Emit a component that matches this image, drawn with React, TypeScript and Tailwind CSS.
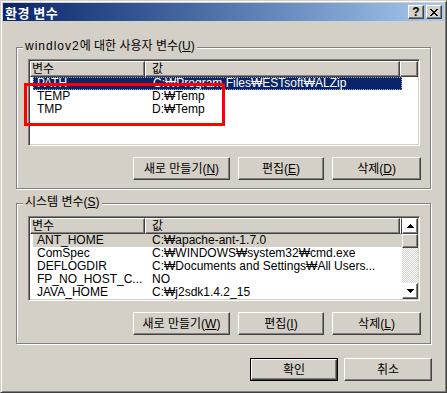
import React from 'react';

const raised =
  'border border-t-white border-l-white border-r-[#404040] border-b-[#404040] shadow-[inset_-1px_-1px_0_#808080]';
const sunken =
  'border border-t-[#808080] border-l-[#808080] border-r-white border-b-white shadow-[inset_1px_1px_0_#404040,inset_-1px_-1px_0_#d4d0c8]';
const etched = 'border border-[#808080] shadow-[inset_1px_1px_0_#ffffff,1px_1px_0_#ffffff]';

interface Var {
  name: string;
  value: string;
}

const userVars: Var[] = [
  { name: 'PATH', value: 'C:₩Program Files₩ESTsoft₩ALZip' },
  { name: 'TEMP', value: 'D:₩Temp' },
  { name: 'TMP', value: 'D:₩Temp' },
];

const sysVars: Var[] = [
  { name: 'ANT_HOME', value: 'C:₩apache-ant-1.7.0' },
  { name: 'ComSpec', value: 'C:₩WINDOWS₩system32₩cmd.exe' },
  { name: 'DEFLOGDIR', value: 'C:₩Documents and Settings₩All Users...' },
  { name: 'FP_NO_HOST_C...', value: 'NO' },
  { name: 'JAVA_HOME', value: 'C:₩j2sdk1.4.2_15' },
  { name: 'JRE_HOME', value: 'C:₩j2sdk1.4.2_15₩jre' },
];

const Key: React.FC<{ k: string }> = ({ k }) => <span className="underline underline-offset-1">{k}</span>;

const Button: React.FC<{ w: string; children: React.ReactNode; primary?: boolean }> = ({ w, children, primary }) => {
  if (primary) {
    return (
      <div className={`${w} h-[23px] border border-black flex`}>
        <div className={`flex-1 flex items-center justify-center ${raised}`}>{children}</div>
      </div>
    );
  }
  return <div className={`${w} h-[23px] flex items-center justify-center ${raised}`}>{children}</div>;
};

const Header = () => (
  <div className="flex h-[16px] bg-[#d4d0c8] leading-[14px]">
    <div className={`w-[115px] pl-[1px] ${raised}`}>변수</div>
    <div className={`w-[255px] pl-[6px] ${raised}`}>값</div>
    <div className={`flex-1 ${raised}`} />
  </div>
);

const Row: React.FC<{ v: Var; tone?: 'focus' | 'gray' }> = ({ v, tone }) => {
  const look =
    tone === 'focus'
      ? 'bg-[#0a246a] text-white border border-dotted border-[#9aa6c4]'
      : tone === 'gray'
        ? 'bg-[#d4d0c8]'
        : '';
  return (
    <div className={`ml-[3px] w-[369px] h-[13px] flex items-center leading-[13px] whitespace-nowrap ${look}`}>
      <div className={`w-[112px] overflow-hidden ${tone === 'focus' ? 'pl-[3px]' : 'pl-[4px]'}`}>{v.name}</div>
      <div className="pl-[7px]">{v.value}</div>
    </div>
  );
};

const Arrow: React.FC<{ up?: boolean }> = ({ up }) => (
  <svg width="7" height="4" viewBox="0 0 7 4" shapeRendering="crispEdges">
    {up ? <path d="M3 0h1v1h1v1h1v1h1v1H0V3h1V2h1V1h1z" fill="#000" /> : <path d="M0 0h7v1H6v1H5v1H4v1H3V3H2V2H1V1H0z" fill="#000" />}
  </svg>
);

const Scrollbar = () => (
  <div className="w-[16px] flex flex-col">
    <div className={`h-[16px] flex items-center justify-center ${raised}`}>
      <Arrow up />
    </div>
    <div className={`h-[14px] bg-[#d4d0c8] ${raised}`} />
    <div className="flex-1 bg-[repeating-conic-gradient(#d4d0c8_0%_25%,#ffffff_0%_50%)] bg-[length:2px_2px]" />
    <div className={`h-[16px] flex items-center justify-center ${raised}`}>
      <Arrow />
    </div>
  </div>
);

export default function App() {
  return (
    <div className="relative w-[447px] h-[393px] bg-[#d4d0c8] p-[2px] border border-t-[#d4d0c8] border-l-[#d4d0c8] border-r-[#404040] border-b-[#404040] shadow-[inset_1px_1px_0_#ffffff,inset_-1px_-1px_0_#808080] text-[12px] text-black font-['Liberation_Sans','Noto_Sans_CJK_KR',sans-serif] overflow-hidden">
      {/* title bar */}
      <div className="h-[18px] flex items-center justify-between bg-linear-to-r from-[#0a246a] to-[#a6caf0] pl-[2px] pr-[2px]">
        <span className="text-white font-bold text-[13px] leading-[15px] tracking-[0.5px] font-['Noto_Sans_CJK_KR',sans-serif]">환경 변수</span>
        <div className="flex gap-[2px]">
          <div className={`w-[16px] h-[14px] bg-[#d4d0c8] flex items-center justify-center ${raised}`}>
            <span className="font-bold text-[12px] leading-[12px] font-['Liberation_Sans',sans-serif]">?</span>
          </div>
          <div className={`w-[16px] h-[14px] bg-[#d4d0c8] flex items-center justify-center ${raised}`}>
            <svg width="8" height="7" viewBox="0 0 8 7" shapeRendering="crispEdges">
              <path d="M0 0h2v1h1v1h2V1h1V0h2v1H7v1H6v1H5v1h1v1h1v1h1v1H6V6H5V5H3v1H2v1H0V6h1V5h1V4h1V3H2V2H1V1H0z" fill="#000" />
            </svg>
          </div>
        </div>
      </div>

      <div className="flex flex-col pl-[13px] pt-[26px]">
        {/* user variables */}
        <div className={`relative w-[415px] h-[142px] pl-[11px] pt-[11px] ${etched}`}>
          <span className="absolute left-[6px] top-[-9px] px-[2px] bg-[#d4d0c8] leading-[15px]">
            <span className="tracking-[1px]">windlov2</span>에 대한 사용자 변수(<Key k="U" />)
          </span>
          <div className={`w-[392px] h-[87px] bg-white p-[1px] ${sunken}`}>
            <div className="w-[388px] h-[83px] overflow-hidden">
              <Header />
              {userVars.map((v, i) => (
                <Row key={v.name} v={v} tone={i === 0 ? 'focus' : undefined} />
              ))}
            </div>
          </div>
          <div className="flex justify-end gap-[8px] pr-[9px] mt-[11px]">
            <Button w="w-[97px]">
              새로 만들기(<Key k="N" />)
            </Button>
            <Button w="w-[86px]">
              편집(<Key k="E" />)
            </Button>
            <Button w="w-[89px]">
              삭제(<Key k="D" />)
            </Button>
          </div>
        </div>

        {/* system variables */}
        <div className={`relative w-[415px] h-[141px] mt-[14px] pl-[11px] pt-[12px] ${etched}`}>
          <span className="absolute left-[6px] top-[-9px] px-[2px] bg-[#d4d0c8] leading-[15px]">
            시스템 변수(<Key k="S" />)
          </span>
          <div className={`w-[392px] h-[85px] bg-white p-[1px] ${sunken}`}>
            <div className="w-[388px] h-[81px] flex overflow-hidden">
              <div className="w-[372px] overflow-hidden">
                <Header />
                {sysVars.map((v, i) => (
                  <Row key={v.name} v={v} tone={i === 0 ? 'gray' : undefined} />
                ))}
              </div>
              <Scrollbar />
            </div>
          </div>
          <div className="flex justify-end gap-[8px] pr-[9px] mt-[11px]">
            <Button w="w-[97px]">
              새로 만들기(<Key k="W" />)
            </Button>
            <Button w="w-[86px]">
              편집(<Key k="I" />)
            </Button>
            <Button w="w-[89px]">
              삭제(<Key k="L" />)
            </Button>
          </div>
        </div>

        <div className="flex justify-end gap-[6px] pr-[12px] mt-[14px]">
          <Button w="w-[88px]" primary>
            확인
          </Button>
          <Button w="w-[88px]">취소</Button>
        </div>
      </div>

      {/* red annotation box */}
      <div className="absolute left-[23px] top-[82px] w-[201px] h-[43px] border-[3px] border-[#ff0000]" />
    </div>
  );
}
